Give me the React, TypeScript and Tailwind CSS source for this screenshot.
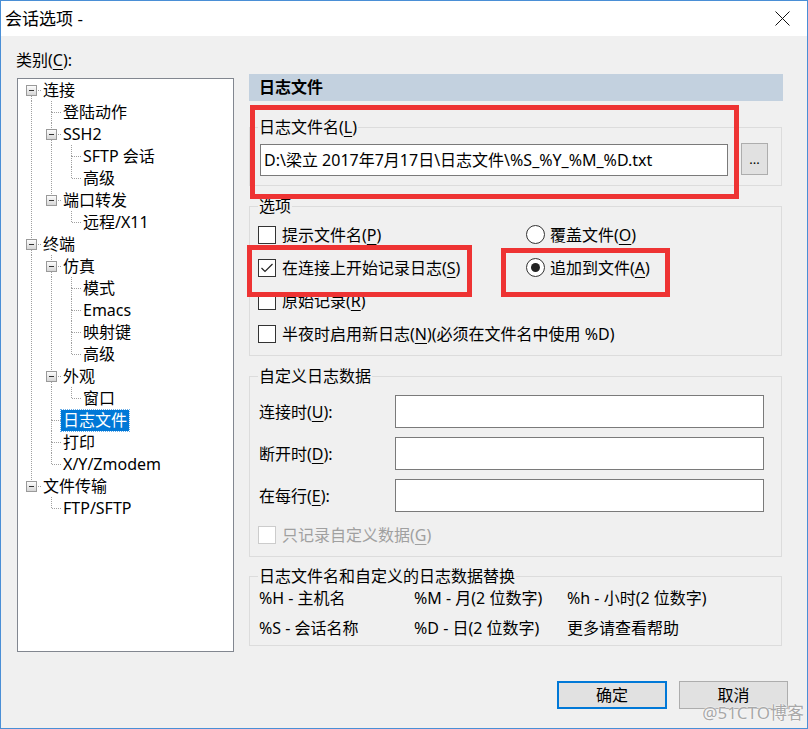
import type { ReactNode } from "react"

type TreeNode = { label: string; children?: TreeNode[]; selected?: boolean }
type Row = {
  label: string
  depth: number
  guides: boolean[]
  first: boolean
  last: boolean
  expander: boolean
  selected?: boolean
}

const tree: TreeNode[] = [
  {
    label: "连接",
    children: [
      { label: "登陆动作" },
      { label: "SSH2", children: [{ label: "SFTP 会话" }, { label: "高级" }] },
      { label: "端口转发", children: [{ label: "远程/X11" }] },
    ],
  },
  {
    label: "终端",
    children: [
      {
        label: "仿真",
        children: [{ label: "模式" }, { label: "Emacs" }, { label: "映射键" }, { label: "高级" }],
      },
      { label: "外观", children: [{ label: "窗口" }] },
      { label: "日志文件", selected: true },
      { label: "打印" },
      { label: "X/Y/Zmodem" },
    ],
  },
  { label: "文件传输", children: [{ label: "FTP/SFTP" }] },
]

function flatten(nodes: TreeNode[], depth: number, guides: boolean[], out: Row[]) {
  nodes.forEach((n, i) => {
    const last = i === nodes.length - 1
    out.push({
      label: n.label,
      depth,
      guides,
      first: depth === 0 && i === 0,
      last,
      expander: !!n.children,
      selected: n.selected,
    })
    if (n.children) flatten(n.children, depth + 1, [...guides, !last], out)
  })
}

const rows: Row[] = []
flatten(tree, 0, [], rows)

const dot = { stroke: "#a0a0a0", strokeWidth: 1, strokeDasharray: "1 1", shapeRendering: "crispEdges" as const }

function Guide({ on }: { on: boolean }) {
  return (
    <svg width="20" height="22" className="shrink-0">
      {on && <line x1="10.5" y1="0" x2="10.5" y2="22" {...dot} />}
    </svg>
  )
}

function Connector({ row }: { row: Row }) {
  return (
    <svg width="20" height="22" className="shrink-0">
      {!row.first && <line x1="10.5" y1="0" x2="10.5" y2="11" {...dot} />}
      {!row.last && <line x1="10.5" y1="11" x2="10.5" y2="22" {...dot} />}
      <line x1="11" y1="11.5" x2="20" y2="11.5" {...dot} />
      {row.expander && (
        <g shapeRendering="crispEdges">
          <defs>
            <linearGradient id="exp" x1="0" y1="0" x2="0" y2="1">
              <stop offset="0" stopColor="#ffffff" />
              <stop offset="1" stopColor="#d4d4d4" />
            </linearGradient>
          </defs>
          <rect x="5.5" y="6.5" width="10" height="10" fill="url(#exp)" stroke="#9a9a9a" />
          <line x1="8" y1="11.5" x2="13" y2="11.5" stroke="#333333" />
        </g>
      )}
    </svg>
  )
}

function M({ c }: { c: string }) {
  return <u className="underline-offset-[3px]">{c}</u>
}

function Check({ checked, disabled }: { checked?: boolean; disabled?: boolean }) {
  return (
    <span
      className={`flex h-[18px] w-[18px] shrink-0 items-center justify-center border bg-white ${
        disabled ? "border-[#cccccc]" : "border-[#333333]"
      }`}
    >
      {checked && (
        <svg width="14" height="14" viewBox="0 0 14 14">
          <polyline points="1.5,7 5,10.5 12.5,3" fill="none" stroke="#222222" strokeWidth="1.2" />
        </svg>
      )}
    </span>
  )
}

function Radio({ checked }: { checked?: boolean }) {
  return (
    <span className="flex h-[19px] w-[19px] shrink-0 items-center justify-center rounded-full border border-[#333333] bg-white">
      {checked && <span className="h-[9px] w-[9px] rounded-full bg-[#222222]" />}
    </span>
  )
}

function Group({ title, className, children }: { title: ReactNode; className: string; children: ReactNode }) {
  return (
    <div className={`relative border border-[#dcdcdc] ${className}`}>
      <span className="absolute -top-[11px] left-[8px] bg-[#f0f0f0] px-[1px] leading-[20px]">{title}</span>
      {children}
    </div>
  )
}

export default function App() {
  return (
    <div className="relative h-[729px] w-[808px] overflow-hidden border border-[#4a8fd6] bg-[#f0f0f0] text-[16px] text-black [font-family:'Noto_Sans','Noto_Sans_CJK_SC',sans-serif]">
      {/* title bar */}
      <div className="flex h-[35px] items-center justify-between bg-white pl-[4px] pr-[17px]">
        <span className="text-[17px] leading-[20px]">会话选项 -</span>
        <svg width="15" height="15" viewBox="0 0 15 15">
          <path d="M0.5 0.5 L14.5 14.5 M14.5 0.5 L0.5 14.5" stroke="#111111" strokeWidth="1" />
        </svg>
      </div>

      <div className="flex flex-col">
        <div className="flex">
          {/* left: category tree */}
          <div className="ml-[15px] flex flex-col">
            <div className="mt-[14px] leading-[20px]">
              类别(<M c="C" />):
            </div>
            <div className="ml-[1px] mt-[8px] h-[574px] w-[217px] border border-[#828790] bg-white pl-[3px]">
              {rows.map((r, i) => (
                <div key={i} className="flex h-[22px] items-center">
                  {r.guides.map((g, j) => (
                    <Guide key={j} on={g} />
                  ))}
                  <Connector row={r} />
                  <span
                    className={`h-[21px] whitespace-nowrap px-[2px] leading-[21px] ${
                      r.selected ? "bg-[#0078d7] text-white outline outline-1 outline-dotted outline-[#6aaee8]" : ""
                    }`}
                  >
                    {r.label}
                  </span>
                </div>
              ))}
            </div>
          </div>

          {/* right: log file page */}
          <div className="ml-[15px] mt-[38px] flex w-[534px] flex-col">
            <div className="h-[27px] bg-[#c3d1df] pl-[10px] font-bold leading-[27px]">日志文件</div>

            <Group
              title={
                <>
                  日志文件名(<M c="L" />)
                </>
              }
              className="mr-[1px] mt-[26px] flex items-center pb-[9px] pl-[10px] pt-[16px]"
            >
              <div className="flex h-[32px] w-[468px] items-center border border-[#7a7a7a] bg-white pl-[3px] leading-[20px]">
                D:\梁立 2017年7月17日\日志文件\%S_%Y_%M_%D.txt
              </div>
              <div className="-mt-[2px] ml-[13px] flex h-[32px] w-[27px] items-center justify-center border border-[#adadad] bg-[#e1e1e1] text-[13px] leading-[14px]">
                ...
              </div>
            </Group>

            <Group title="选项" className="mr-[1px] mt-[20px] pb-[5px] pl-[8px] pt-[11px]">
              <div className="grid grid-cols-[268px_1fr]">
                <div className="flex h-[33px] items-center gap-[6px]">
                  <Check />
                  <span>
                    提示文件名(<M c="P" />)
                  </span>
                </div>
                <div className="flex h-[33px] items-center gap-[5px]">
                  <Radio />
                  <span>
                    覆盖文件(<M c="O" />)
                  </span>
                </div>
                <div className="flex h-[33px] items-center gap-[6px]">
                  <Check checked />
                  <span>
                    在连接上开始记录日志(<M c="S" />)
                  </span>
                </div>
                <div className="flex h-[33px] items-center gap-[5px]">
                  <Radio checked />
                  <span>
                    追加到文件(<M c="A" />)
                  </span>
                </div>
                <div className="col-span-2 flex h-[33px] items-center gap-[6px]">
                  <Check />
                  <span>
                    原始记录(<M c="R" />)
                  </span>
                </div>
                <div className="col-span-2 flex h-[33px] items-center gap-[6px]">
                  <Check />
                  <span>
                    半夜时启用新日志(<M c="N" />)(必须在文件名中使用 %D)
                  </span>
                </div>
              </div>
            </Group>

            <Group title="自定义日志数据" className="mr-[1px] mt-[20px] flex flex-col pb-[12px] pt-[18px]">
              <div className="flex flex-col gap-[9px]">
                {[
                  ["连接时", "U"],
                  ["断开时", "D"],
                  ["在每行", "E"],
                ].map(([t, k]) => (
                  <div key={k} className="flex items-center">
                    <span className="w-[145px] pl-[9px]">
                      {t}(<M c={k} />):
                    </span>
                    <div className="h-[33px] w-[369px] border border-[#7a7a7a] bg-white" />
                  </div>
                ))}
              </div>
              <div className="mt-[13px] flex h-[19px] items-center gap-[6px] pl-[8px] text-[#a0a0a0]">
                <Check disabled />
                <span>
                  只记录自定义数据(<M c="G" />)
                </span>
              </div>
            </Group>

            <Group
              title="日志文件名和自定义的日志数据替换"
              className="mr-[1px] mt-[19px] grid grid-cols-[155px_153px_1fr] gap-y-[10px] pb-[7px] pl-[9px] pt-[11px] leading-[20px]"
            >
              <span>%H - 主机名</span>
              <span>%M - 月(2 位数字)</span>
              <span>%h - 小时(2 位数字)</span>
              <span>%S - 会话名称</span>
              <span>%D - 日(2 位数字)</span>
              <span>更多请查看帮助</span>
            </Group>
          </div>
        </div>

        {/* dialog buttons */}
        <div className="mt-[29px] flex justify-end gap-[12px] pr-[19px]">
          <button className="h-[28px] w-[110px] border-2 border-[#0078d7] bg-[#e1e1e1] leading-[20px]">确定</button>
          <button className="h-[28px] w-[109px] border border-[#adadad] bg-[#e1e1e1] leading-[20px]">取消</button>
        </div>
      </div>

      {/* red annotation boxes */}
      <div className="absolute left-[249px] top-[104px] h-[94px] w-[489px] border-[5px] border-[#ee3333]" />
      <div className="absolute left-[246px] top-[244px] h-[52px] w-[225px] border-[5px] border-[#ee3333]" />
      <div className="absolute left-[500px] top-[247px] h-[49px] w-[169px] border-[5px] border-[#ee3333]" />

      {/* watermark */}
      <div className="absolute bottom-[5px] right-[3px] text-[17px] leading-[20px] text-[#a8a8a8] [text-shadow:0_0_2px_#ffffff,0_0_1px_#ffffff]">
        @51CTO博客
      </div>
    </div>
  )
}
